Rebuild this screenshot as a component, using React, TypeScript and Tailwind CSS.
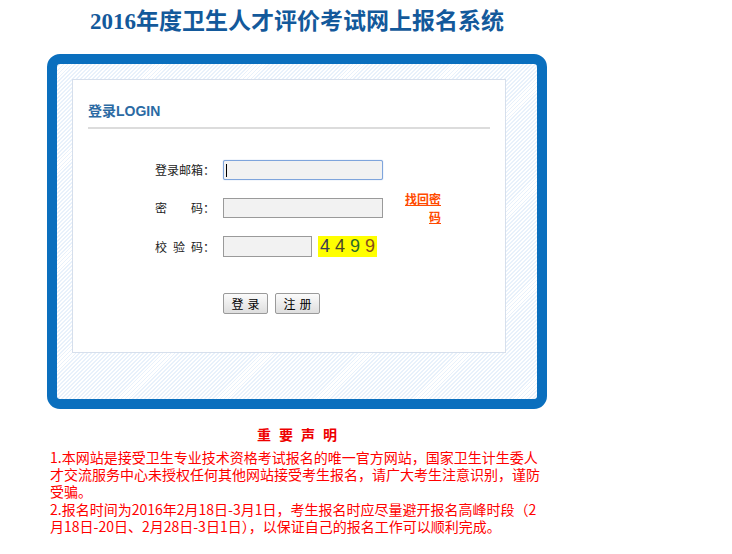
import React from 'react';

const cjk = "font-['SimSun','Noto_Sans_CJK_SC',sans-serif]";

export default function App() {
  return (
    <div className={`min-h-screen bg-white ${cjk}`}>
      <div className="ml-[47px] w-[500px]">
        {/* 标题 */}
        <h1 className="text-center text-[23px] font-bold leading-[44px] text-[#13599b] font-['Liberation_Serif','Noto_Sans_CJK_SC',serif]">
          2016年度卫生人才评价考试网上报名系统
        </h1>

        {/* 登录框 */}
        <div className="mt-[10px] rounded-[13px] border-[10px] border-[#0a6fbe] bg-[repeating-linear-gradient(135deg,#ffffff_0px,#ffffff_1.5px,#e8f1fb_1.5px,#e8f1fb_2.8px)]">
          <div className="pl-[15px] pt-[15px] pb-[46px]">
            <div className="w-[434px] h-[274px] border border-[#d6dfec] bg-white">
              <div className="px-[15px] pt-[20px]">
                <h2 className="text-[14px] font-bold leading-[22px] text-[#2b6aa3] font-['Liberation_Sans','Noto_Sans_CJK_SC',sans-serif]">
                  登录LOGIN
                </h2>
                <div className="mt-[5px] h-[2px] bg-[#dcdcdc]" />
              </div>

              <div className="mt-[31px] flex flex-col gap-[18px] text-[12px] text-[#222]">
                <div className="flex h-[20px] items-center">
                  <span className="ml-[82px] w-[68px]">登录邮箱：</span>
                  <div className="relative h-[20px] w-[160px] rounded-[2px] border border-[#7fa5dc] bg-[#f2f2f2] shadow-[0_0_1px_#7fa5dc]">
                    <span className="absolute left-[2px] top-[3px] h-[13px] w-px bg-black" />
                  </div>
                </div>

                <div className="flex h-[20px] items-center">
                  <span className="ml-[82px] w-[68px]">
                    <span className="tracking-[24px]">密</span>码：
                  </span>
                  <div className="h-[20px] w-[160px] border border-[#9a9a9a] bg-[#f2f2f2]" />
                  <a
                    href="#"
                    className="ml-[19px] w-[39px] text-right font-bold leading-[18px] text-[#ff4a00] underline"
                  >
                    找回密码
                  </a>
                </div>

                <div className="flex h-[21px] items-center">
                  <span className="ml-[82px] w-[68px]">
                    <span className="tracking-[6px]">校验</span>码：
                  </span>
                  <div className="h-[21px] w-[89px] border border-[#9a9a9a] bg-[#f2f2f2]" />
                  <div className="ml-[6px] flex h-[21px] w-[59px] items-center justify-center bg-[#ffff00] text-[18px] tracking-[5px] pl-[5px] font-['Liberation_Sans',sans-serif]">
                    <span className="text-[#3a3a58]">4</span>
                    <span className="text-[#4a4628]">4</span>
                    <span className="text-[#2c6a2c]">9</span>
                    <span className="text-[#8a4c1c]">9</span>
                  </div>
                </div>
              </div>

              <div className="ml-[150px] mt-[36px] flex gap-[7px]">
                <button className="h-[21px] w-[45px] rounded-[2px] border border-[#9a9a9a] bg-gradient-to-b from-[#fbfbfb] to-[#dedede] text-[12px] text-black tracking-[4px] pl-[4px]">
                  登录
                </button>
                <button className="h-[21px] w-[45px] rounded-[2px] border border-[#9a9a9a] bg-gradient-to-b from-[#fbfbfb] to-[#dedede] text-[12px] text-black tracking-[4px] pl-[4px]">
                  注册
                </button>
              </div>
            </div>
          </div>
        </div>

        {/* 重要声明 */}
        <div className="mt-[13px]">
          <h3 className="text-center text-[14px] font-bold leading-[24px] tracking-[8px] pl-[8px] text-[#ee0000]">
            重要声明
          </h3>
          <div className="mt-[3px] pl-[3px] text-[14px] leading-[17px] text-[#ff0000]">
            <p>
              1.本网站是接受卫生专业技术资格考试报名的唯一官方网站，国家卫生计生委人才交流服务中心未授权任何其他网站接受考生报名，请广大考生注意识别，谨防受骗。
            </p>
            <p className="mt-px">
              2.报名时间为2016年2月18日-3月1日，考生报名时应尽量避开报名高峰时段（2月18日-20日、2月28日-3日1日），以保证自己的报名工作可以顺利完成。
            </p>
          </div>
        </div>
      </div>
    </div>
  );
}
